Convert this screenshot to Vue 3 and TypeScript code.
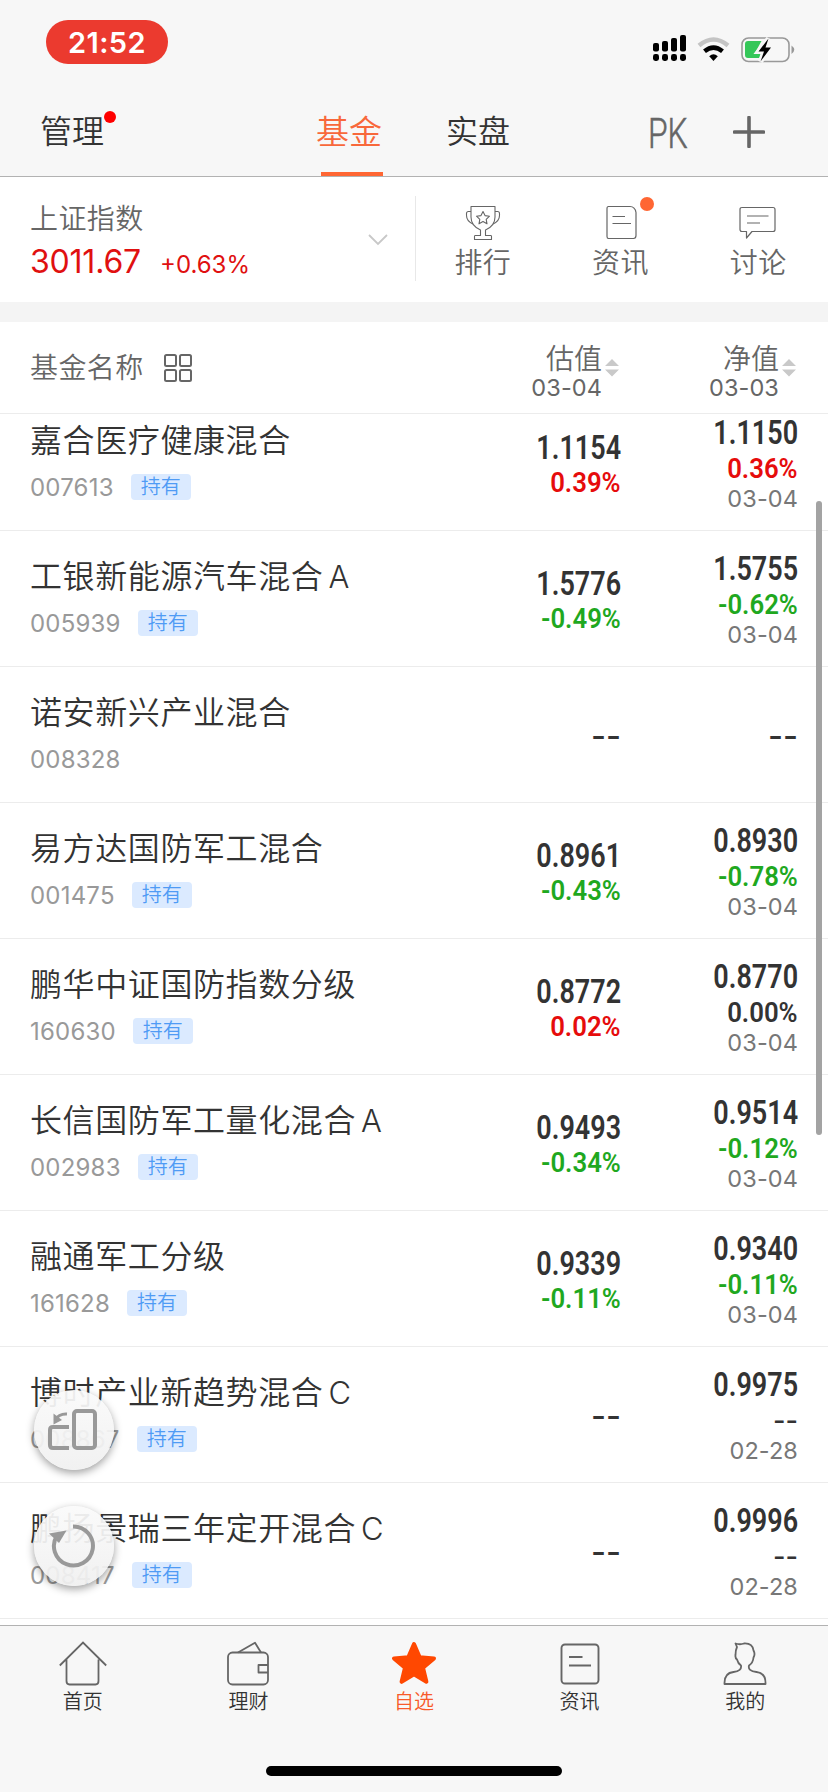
<script setup lang="ts">
interface Fund {
  name: string
  cls?: string
  code: string
  held: boolean
  est: string
  estPct?: string
  nav: string
  navPct?: string
  date?: string
}

const funds: Fund[] = [
  { name: '嘉合医疗健康混合', code: '007613', held: true, est: '1.1154', estPct: '0.39%', nav: '1.1150', navPct: '0.36%', date: '03-04' },
  { name: '工银新能源汽车混合', cls: 'A', code: '005939', held: true, est: '1.5776', estPct: '-0.49%', nav: '1.5755', navPct: '-0.62%', date: '03-04' },
  { name: '诺安新兴产业混合', code: '008328', held: false, est: '--', nav: '--' },
  { name: '易方达国防军工混合', code: '001475', held: true, est: '0.8961', estPct: '-0.43%', nav: '0.8930', navPct: '-0.78%', date: '03-04' },
  { name: '鹏华中证国防指数分级', code: '160630', held: true, est: '0.8772', estPct: '0.02%', nav: '0.8770', navPct: '0.00%', date: '03-04' },
  { name: '长信国防军工量化混合', cls: 'A', code: '002983', held: true, est: '0.9493', estPct: '-0.34%', nav: '0.9514', navPct: '-0.12%', date: '03-04' },
  { name: '融通军工分级', code: '161628', held: true, est: '0.9339', estPct: '-0.11%', nav: '0.9340', navPct: '-0.11%', date: '03-04' },
  { name: '博时产业新趋势混合', cls: 'C', code: '008867', held: true, est: '--', nav: '0.9975', navPct: '--', date: '02-28' },
  { name: '鹏扬景瑞三年定开混合', cls: 'C', code: '008417', held: true, est: '--', nav: '0.9996', navPct: '--', date: '02-28' },
]

function tone(pct: string): string {
  if (pct === '--') return 'dash'
  const n = parseFloat(pct)
  return n > 0 ? 'up' : n < 0 ? 'down' : 'flat'
}
</script>

<template>
  <div class="screen">
    <header class="top">
      <div class="status">
        <span class="clock">21:52</span>
        <svg class="signals" width="146" height="32" viewBox="0 0 146 32">
          <g fill="#000">
            <rect x="3" y="9" width="6" height="8.500" rx="2" />
            <rect x="12" y="7" width="6" height="10.500" rx="2" />
            <rect x="21" y="4" width="6" height="13.500" rx="2" />
            <rect x="30" y="1" width="6" height="16.500" rx="2" />
            <rect x="3" y="20" width="6" height="7" rx="2.400" />
            <rect x="12" y="20" width="6" height="7" rx="2.400" />
            <rect x="21" y="20" width="6" height="7" rx="2.400" />
            <rect x="30" y="20" width="6" height="7" rx="2.400" />
          </g>
          <path d="M49 11.500Q63.500 -.500 78 11.500" fill="none" stroke="#c4c4c4" stroke-width="4.500" />
          <path d="M54.500 17.300Q63.500 10 72.500 17.300" fill="none" stroke="#000" stroke-width="4.500" />
          <path d="M59.200 22.200Q63.500 18.500 67.800 22.200L63.500 27Z" fill="#000" />
          <rect x="92" y="4" width="47" height="23.500" rx="6.500" fill="none" stroke="#999" stroke-width="1.600" />
          <path d="M141.500 11.500Q147 15.700 141.500 20Z" fill="#999" />
          <path d="M98 7h13.500l-6 11h6l-2 6H98q-3 0-3-3V10q0-3 3-3Z" fill="#35c759" />
          <path d="M118.500 4.500 108.500 17.500h5.500l-3.500 10L121 13.500h-5.500Z" fill="#000" stroke="#f7f7f7" stroke-width="5" paint-order="stroke" />
        </svg>
      </div>
      <nav class="nav">
        <span class="manage">管理<i class="dot"></i></span>
        <span class="tab on">基金</span>
        <span class="tab second">实盘</span>
        <span class="pk"><b>PK</b></span>
        <svg class="plus" width="32" height="32" viewBox="0 0 32 32">
          <path d="M16 1.500v29M1.500 16h29" stroke="#666" stroke-width="3.600" stroke-linecap="round" />
        </svg>
      </nav>
    </header>

    <section class="market">
      <div class="index">
        <div>
          <div class="index-name">上证指数</div>
          <div class="index-row"><b>3011.67</b><span>+0.63%</span></div>
        </div>
        <svg class="chev" width="20" height="12" viewBox="0 0 20 12">
          <path d="M1 1l9 9 9-9" fill="none" stroke="#c8c8c8" stroke-width="1.800" />
        </svg>
      </div>
      <div class="links">
        <div class="link">
          <svg width="36" height="36" viewBox="0 0 36 36" fill="none" stroke="#666" stroke-width="1.100">
            <path d="M6 1.500h24V12q0 9-9.500 13v5.500H26q.5 0 .5 1v3h-17v-3q0-1 .5-1h5.500V25Q6 21 6 12Z" stroke-linejoin="round" />
            <path d="M6 6.500H3.500q-2 0-2 2v2q0 5.500 6.500 8.500M30 6.500h2.500q2 0 2 2v2q0 5.500-6.500 8.500" />
            <path d="M18 6.500l2 4.100 4.500.6-3.300 3.100.8 4.500-4-2.200-4 2.200.8-4.500-3.300-3.100 4.500-.6Z" stroke-linejoin="round" />
          </svg>
          <span>排行</span>
        </div>
        <div class="link">
          <svg width="36" height="36" viewBox="0 0 36 36" fill="none" stroke="#666" stroke-width="1.200">
            <path d="M5.500 1.500H27q5 0 6 6v23q0 3-2.500 3h-25Q4 33.500 4 31.500v-28q0-2 1.500-2Z" />
            <path d="M9.500 11.500h12.500M9.500 18.500H28" />
          </svg>
          <span>资讯</span>
          <i class="dot"></i>
        </div>
        <div class="link">
          <svg width="38" height="36" viewBox="0 0 38 36" fill="none" stroke="#666" stroke-width="1.200">
            <path d="M3 2.500h31q2 0 2 2v20q0 2-2 2H13L7.500 33v-6.500H3q-2 0-2-2v-20q0-2 2-2Z" stroke-linejoin="round" />
            <path d="M8 11h21.500M8 18h13" />
          </svg>
          <span>讨论</span>
        </div>
      </div>
    </section>

    <section class="thead">
      <span class="th-name">基金名称</span>
      <svg class="grid" width="28" height="28" viewBox="0 0 28 28" fill="none" stroke="#666" stroke-width="2">
        <rect x="1" y="1" width="11" height="11" rx="1.500" /><rect x="16" y="1" width="11" height="11" rx="1.500" />
        <rect x="1" y="16" width="11" height="11" rx="1.500" /><rect x="16" y="16" width="11" height="11" rx="1.500" />
      </svg>
      <div v-for="h in [['估值', '03-04'], ['净值', '03-03']]" :key="h[0]" class="th">
        <div class="th-text"><span>{{ h[0] }}</span><em>{{ h[1] }}</em></div>
        <svg width="14" height="18" viewBox="0 0 14 18"><path d="M0 7l7-7 7 7ZM0 10.500h14l-7 7Z" fill="#c9c9c9" /></svg>
      </div>
    </section>

    <main class="viewport">
      <div class="list">
        <article v-for="f in funds" :key="f.code" class="row">
          <div class="fund">
            <div class="name">{{ f.name }}<span v-if="f.cls" class="cls">{{ f.cls }}</span></div>
            <div class="meta"><span class="code">{{ f.code }}</span><span v-if="f.held" class="tag">持有</span></div>
          </div>
          <div class="col" :class="{ single: !f.estPct }">
            <span class="val" :class="{ dash: f.est === '--' }">{{ f.est }}</span>
            <span v-if="f.estPct" class="pct" :class="tone(f.estPct)">{{ f.estPct }}</span>
          </div>
          <div class="col nav-col" :class="{ single: !f.navPct }">
            <span class="val" :class="{ dash: f.nav === '--' }">{{ f.nav }}</span>
            <span v-if="f.navPct" class="pct" :class="tone(f.navPct)">{{ f.navPct }}</span>
            <span v-if="f.date" class="date">{{ f.date }}</span>
          </div>
        </article>
      </div>
    </main>
    <i class="scrollbar"></i>

    <button class="fab rotate">
      <svg width="52" height="46" viewBox="0 0 52 46" fill="none" stroke="#999" stroke-width="4">
        <rect x="26" y="4" width="21" height="37" rx="3" />
        <path d="M21 20H5q-3 0-3 3v15q0 3 3 3h16" />
        <path d="M19 7q-8-.5-12 6" stroke-width="3" />
        <path d="M5.500 6.500v11l8.500-4.500Z" fill="#999" stroke="none" />
      </svg>
    </button>
    <button class="fab refresh">
      <svg width="52" height="46" viewBox="0 0 52 46" fill="none" stroke="#999" stroke-width="4">
        <path d="M25 3.500a19.500 19.500 0 1 1-16 9" />
        <path d="M1 10.500 18.500 7.500 11 20Z" fill="#999" stroke="none" />
      </svg>
    </button>

    <footer class="tabbar">
      <div class="item">
        <svg width="48" height="48" viewBox="0 0 48 48" fill="none" stroke="#666" stroke-width="1.800">
          <path d="M.800 25.500 24 2.500l23.200 23M7.500 19.500V41q0 3.500 3 3.500h26q3 0 3-3.500V19.500" />
        </svg>
        <span>首页</span>
      </div>
      <div class="item">
        <svg width="48" height="48" viewBox="0 0 48 48" fill="none" stroke="#666" stroke-width="1.800">
          <rect x="4" y="12.500" width="40" height="32" rx="4.500" />
          <path d="M14 12.500 31 2.800l6 9.700M44 25h-9.500v7.500H44" stroke-linejoin="round" />
        </svg>
        <span>理财</span>
      </div>
      <div class="item on">
        <svg width="48" height="48" viewBox="0 0 48 48">
          <path d="M24 4l5.700 13.200 14.300 1.200-11 9.400 3.400 14L24 34.300 11.600 41.800l3.400-14L4 18.400l14.300-1.200Z" fill="#ff4801" stroke="#ff4801" stroke-width="4" stroke-linejoin="round" />
        </svg>
        <span>自选</span>
      </div>
      <div class="item">
        <svg width="48" height="48" viewBox="0 0 48 48" fill="none" stroke="#666" stroke-width="1.900">
          <rect x="5.500" y="4.500" width="37" height="39" rx="3.500" /><path d="M13 17h13.500M13 25.500h22" />
        </svg>
        <span>资讯</span>
      </div>
      <div class="item">
        <svg width="48" height="48" viewBox="0 0 48 48" fill="none" stroke="#666" stroke-width="1.800" stroke-linejoin="round">
          <path d="M3.500 44h41q.5-11-9-12-9-1-7.500-6.500 4-2.500 4.500-8 2-3.500 0-7Q31.500 3 23 3.500q-4 1.500-8.500 0l1.500 3.500q-1.500 3-1.500 8-.5 3 1.500 4.500 1 4 4 6 1 5.500-7.500 6.500Q3 33 3.500 44Z" />
        </svg>
        <span>我的</span>
      </div>
      <i class="home-bar"></i>
    </footer>
  </div>
</template>

<style>
body { margin: 0; background: #fff; }
</style>

<style scoped>
.screen {
  position: relative;
  width: 828px;
  height: 1792px;
  overflow: hidden;
  display: flex;
  flex-direction: column;
  background: #fff;
  font-family: Inter, "Noto Sans CJK SC", sans-serif;
  color: #333;
}
svg { display: block; flex: none; }
i, em { font-style: normal; }
.top { height: 176px; flex: none; background: #f7f7f7; border-bottom: 1px solid #b2b2b2; }
.status { display: flex; justify-content: space-between; height: 86px; padding: 20px 32px 0 46px; box-sizing: border-box; }
.clock {
  width: 122px; height: 44px; border-radius: 22px; background: #eb3a2f; color: #fff;
  font-size: 29px; font-weight: 600; line-height: 45px; text-align: center; letter-spacing: .4px;
}
.signals { margin-top: 14px; }
.nav { display: flex; height: 90px; line-height: 92px; padding-left: 40px; font-size: 32px; }
.manage, .tab, .name, .index-name, .th-name, .link span, .th-text span, .item span, .tag { font-weight: 350; }
.manage { position: relative; width: 276px; }
.manage .dot { position: absolute; left: 64px; top: 25px; width: 12px; height: 12px; border-radius: 50%; background: #f00; }
.tab.on {
  width: 62px; margin-right: 67px; color: #f8683b; font-size: 33px; white-space: nowrap;
  background: linear-gradient(#ff6633, #ff6633) 5px 86px / 62px 4px no-repeat; padding-right: 5px;
}
.tab.second { margin-right: 138px; width: 64px; margin-left: -4px; white-space: nowrap; }
.pk { width: 42px; white-space: nowrap; color: #666; }
.pk b { display: inline-block; font: 300 43px/94px Roboto, sans-serif; transform: scaleX(.74); transform-origin: left; -webkit-text-stroke: .6px #666; }
.plus { margin: 30px 0 0 43px; }

.market { display: flex; flex: none; height: 125px; border-bottom: 20px solid #f4f4f4; }
.index { display: flex; width: 416px; box-sizing: border-box; height: 85px; margin-top: 19px; padding-left: 30px; border-right: 1px solid #e8e8e8; }
.index > div { width: 338px; }
.index-name, .th-name, .link span { font-size: 28px; letter-spacing: .4px; color: #666; }
.index-name { line-height: 40px; margin-top: 3px; }
.index-row { display: flex; align-items: baseline; color: #e01010; line-height: 46px; }
.index-row b { font-weight: 400; font-size: 32px; letter-spacing: -.2px; width: 130px; }
.index-row span { font-size: 24px; }
.chev { margin-top: 38px; }
.links { display: flex; width: 413px; margin-left: -2px; }
.link { position: relative; flex: 1; display: flex; flex-direction: column; align-items: center; padding-top: 28px; }
.link span { line-height: 40px; margin-top: 2px; }
.link .dot { position: absolute; left: 88px; top: 20px; width: 14px; height: 14px; border-radius: 50%; background: #ff6633; }

.thead { display: flex; flex: none; height: 91px; border-bottom: 1px solid #ececec; padding-left: 30px; color: #666; }
.th-name { width: 134px; line-height: 93px; }
.grid { margin-top: 32px; }
.th { display: flex; width: 177px; justify-content: flex-end; }
.th:nth-of-type(1) { margin-left: 250px; }
.th-text { display: flex; flex-direction: column; align-items: flex-end; width: 90px; }
.th-text span { font-size: 28px; line-height: 32px; margin-top: 21px; }
.th-text em { font-size: 23.500px; line-height: 26px; letter-spacing: .1px; }
.th svg { margin: 37px 0 0 3px; }

.viewport { flex: none; height: 1211px; overflow: hidden; }
.list { margin-top: -20px; border-bottom: 1px solid #ececec; }
.row { display: flex; height: 136px; box-sizing: border-box; border-top: 1px solid #ececec; padding-left: 30px; }
.fund { width: 414px; padding-top: 24px; }
.name { font-size: 32px; letter-spacing: .6px; line-height: 44px; white-space: nowrap; }
.cls { margin-left: 5px; font-size: 31px; }
.meta { display: flex; align-items: center; height: 26px; margin-top: 11px; }
.code { font-size: 24px; color: #999; letter-spacing: .2px; }
.tag { width: 60px; height: 26px; margin-left: 17px; border-radius: 4px; background: #dbeaff; color: #4f9bf5; font-size: 20px; line-height: 26px; text-align: center; }
.col { width: 177px; display: flex; flex-direction: column; align-items: flex-end; padding-top: 35px; box-sizing: border-box; font-family: Roboto, sans-serif; }
.nav-col { padding-top: 20px; }
.val { font-size: 32.500px; font-weight: 600; line-height: 36px; transform: scaleX(.83); transform-origin: right; }
.pct { font-size: 28px; font-weight: 600; line-height: 34px; transform: scaleX(.92); transform-origin: right; }
.nav-col .pct { line-height: 36px; }
.up { color: #e60c0c; }
.down { color: #1fa81f; }
.flat { color: #333; }
.date { font-family: Inter, sans-serif; font-size: 23.500px; line-height: 24px; letter-spacing: .1px; color: #777; }
.col.single { padding-top: 51px; }
.dash { font-family: Inter, sans-serif; font-weight: 500; transform: none; color: #333; }
.pct.dash { font-size: 27px; }

.scrollbar { position: absolute; left: 816px; top: 501px; width: 6px; height: 634px; border-radius: 3px; background: #a3a3a3; }
.fab {
  position: absolute; left: 34px; width: 80px; height: 80px; padding: 0; border: 0; border-radius: 50%;
  background: linear-gradient(rgba(250, 250, 250, .93), rgba(240, 240, 240, .93)); box-shadow: 0 3px 9px rgba(0, 0, 0, .38);
}
.fab svg { margin: 0 auto; }
.rotate { top: 1390px; }
.refresh { top: 1506px; }

.tabbar { position: relative; display: flex; flex: 1; background: #f7f7f7; border-top: 1px solid #b2b2b2; }
.item { flex: 1; display: flex; flex-direction: column; align-items: center; padding-top: 14px; font-size: 20px; }
.item span { line-height: 28px; }
.item.on { color: #f85a2a; }
.home-bar { position: absolute; left: 266px; top: 140px; width: 296px; height: 10px; border-radius: 5px; background: #000; }
</style>
